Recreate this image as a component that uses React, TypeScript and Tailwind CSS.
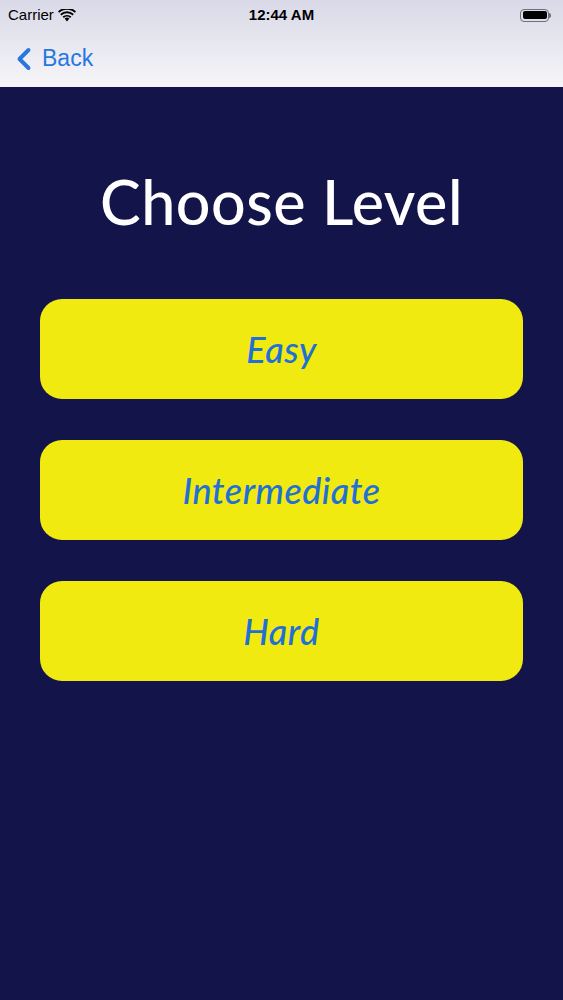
import { ChevronLeft } from "lucide-react";

const levels = ["Easy", "Intermediate", "Hard"];

const StatusBar = () => (
  <div className="flex items-center justify-between h-[30px] px-2 text-[15px] text-black font-['Liberation_Sans',sans-serif]">
    <div className="flex items-center gap-1 w-[120px]">
      <span>Carrier</span>
      <svg width="18" height="13" viewBox="0 0 18 13">
        <path d="M9 12.5 L6.6 9.6 A3.6 3.6 0 0 1 11.4 9.6 Z" fill="black" />
        <path d="M4.6 7.6 A6.6 6.6 0 0 1 13.4 7.6 L12.2 9 A4.8 4.8 0 0 0 5.8 9 Z" fill="black" />
        <path d="M2.2 5 A10 10 0 0 1 15.8 5 L14.6 6.4 A8.2 8.2 0 0 0 3.4 6.4 Z" fill="black" />
        <path d="M0 2.4 A13 13 0 0 1 18 2.4 L16.8 3.8 A11.2 11.2 0 0 0 1.2 3.8 Z" fill="black" />
      </svg>
    </div>
    <span className="font-bold">12:44 AM</span>
    <div className="flex items-center justify-end w-[120px] pr-1">
      <div className="flex items-center">
        <div className="w-[29px] h-[13px] rounded-[4px] border border-gray-500 p-[1.5px]">
          <div className="w-full h-full rounded-[2px] bg-black" />
        </div>
        <div className="w-[2px] h-[5px] bg-gray-500 rounded-r-sm" />
      </div>
    </div>
  </div>
);

export default function App() {
  return (
    <div className="w-[563px] h-[1000px] flex flex-col bg-[#13154a]">
      <div className="bg-gradient-to-b from-[#d9d9e8] to-[#f6f6f8] h-[87px] flex flex-col">
        <StatusBar />
        <button className="flex items-center gap-1 pl-3 h-[57px] text-[#2876e0] text-[23px] font-['Liberation_Sans',sans-serif]">
          <ChevronLeft size={36} strokeWidth={2.6} className="-ml-1.5" />
          <span className="-ml-1">Back</span>
        </button>
      </div>
      <div className="flex flex-col items-center px-10 pt-[84px]">
        <h1 className="text-white text-[61px] leading-none font-['Lato',sans-serif] font-medium tracking-[0.5px]">
          Choose Level
        </h1>
        <div className="w-full flex flex-col gap-[41px] mt-[67px]">
          {levels.map((level) => (
            <button
              key={level}
              className="h-[100px] w-full rounded-[22px] bg-[#f1ea10] text-[#2170d6] text-[36px] italic font-medium tracking-[0.5px] font-['Lato',sans-serif]"
            >
              {level}
            </button>
          ))}
        </div>
      </div>
    </div>
  );
}
